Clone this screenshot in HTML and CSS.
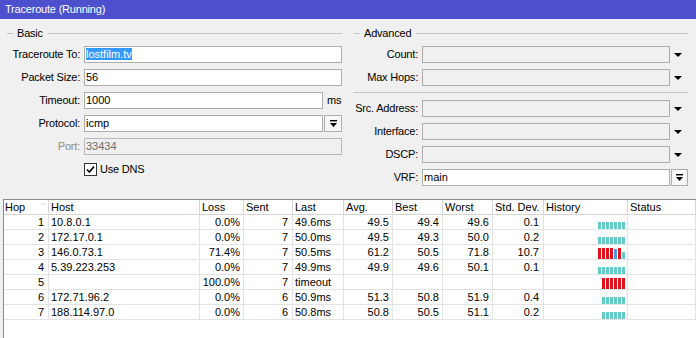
FILE: index.html
```html
<!DOCTYPE html>
<html lang="en">

<head>
  <meta charset="UTF-8">
  <title>Traceroute (Running)</title>
  <link rel="stylesheet" href="styles.css">
</head>

<body>
  <!-- Window title -->
  <div class="titlebar">Traceroute (Running)</div>

  <div class="top">
    <!-- Basic group -->
    <div class="group">
      <div class="legend">Basic</div>
      <div class="rows">
        <div class="row">
          <span class="label">Traceroute To:</span>
          <div class="ctl"><div class="box"><span class="sel">lostfilm.tv</span></div></div>
        </div>
        <div class="row">
          <span class="label">Packet Size:</span>
          <div class="ctl"><div class="box">56</div></div>
        </div>
        <div class="row">
          <span class="label">Timeout:</span>
          <div class="ctl"><div class="box">1000</div><span class="unit">ms</span></div>
        </div>
        <div class="row">
          <span class="label">Protocol:</span>
          <div class="ctl">
            <div class="box">icmp</div>
            <span class="combo-btn">
              <svg width="9" height="9" viewBox="0 0 9 9"><rect x="1" y="1" width="7" height="1.4" fill="#000"/><polygon points="1,4 8,4 4.5,8" fill="#000"/></svg>
            </span>
          </div>
        </div>
        <div class="row off">
          <span class="label">Port:</span>
          <div class="ctl"><div class="box">33434</div></div>
        </div>
        <div class="row check-row">
          <span></span>
          <label class="check">
            <svg width="13" height="13" viewBox="0 0 13 13"><rect x="0.5" y="0.5" width="12" height="12" fill="#fff" stroke="#333"/><path d="M3 6.5 L5.3 9 L10 3.6" fill="none" stroke="#000" stroke-width="1.6"/></svg>
            Use DNS
          </label>
        </div>
      </div>
    </div>

    <!-- Advanced group -->
    <div class="group adv">
      <div class="legend">Advanced</div>
      <div class="rows">
        <div class="row">
          <span class="label">Count:</span>
          <div class="ctl"><div class="box empty"></div><span class="drop"></span></div>
        </div>
        <div class="row">
          <span class="label">Max Hops:</span>
          <div class="ctl"><div class="box empty"></div><span class="drop"></span></div>
        </div>
        <div class="sep"></div>
        <div class="row">
          <span class="label">Src. Address:</span>
          <div class="ctl"><div class="box empty"></div><span class="drop"></span></div>
        </div>
        <div class="row">
          <span class="label">Interface:</span>
          <div class="ctl"><div class="box empty"></div><span class="drop"></span></div>
        </div>
        <div class="row">
          <span class="label">DSCP:</span>
          <div class="ctl"><div class="box empty"></div><span class="drop"></span></div>
        </div>
        <div class="row">
          <span class="label">VRF:</span>
          <div class="ctl">
            <div class="box">main</div>
            <span class="combo-btn">
              <svg width="9" height="9" viewBox="0 0 9 9"><rect x="1" y="1" width="7" height="1.4" fill="#000"/><polygon points="1,4 8,4 4.5,8" fill="#000"/></svg>
            </span>
          </div>
        </div>
      </div>
    </div>
  </div>

  <!-- Hops table -->
  <div class="grid">
    <div class="tr head">
      <div class="th hop">Hop <svg class="sort" width="7" height="4" viewBox="0 0 7 4"><path d="M0.5 3.5 L3.5 0.5 L6.5 3.5" fill="none" stroke="#c4c4c4"/></svg></div>
      <div class="th">Host</div>
      <div class="th">Loss</div>
      <div class="th">Sent</div>
      <div class="th">Last</div>
      <div class="th">Avg.</div>
      <div class="th">Best</div>
      <div class="th">Worst</div>
      <div class="th">Std. Dev.</div>
      <div class="th">History</div>
      <div class="th">Status</div>
    </div>

    <div class="tr">
      <div class="td num pr4">1</div><div class="td">10.8.0.1</div><div class="td num">0.0%</div><div class="td num pr4">7</div><div class="td">49.6ms</div>
      <div class="td num">49.5</div><div class="td num">49.4</div><div class="td num">49.6</div><div class="td num pr4">0.1</div>
      <div class="td hist"><i class="ok"></i><i class="ok"></i><i class="ok"></i><i class="ok"></i><i class="ok"></i><i class="ok"></i><i class="ok"></i></div>
      <div class="td"></div>
    </div>
    <div class="tr">
      <div class="td num pr4">2</div><div class="td">172.17.0.1</div><div class="td num">0.0%</div><div class="td num pr4">7</div><div class="td">50.0ms</div>
      <div class="td num">49.5</div><div class="td num">49.3</div><div class="td num">50.0</div><div class="td num pr4">0.2</div>
      <div class="td hist"><i class="ok"></i><i class="ok"></i><i class="ok"></i><i class="ok"></i><i class="ok"></i><i class="ok"></i><i class="ok"></i></div>
      <div class="td"></div>
    </div>
    <div class="tr">
      <div class="td num pr4">3</div><div class="td">146.0.73.1</div><div class="td num">71.4%</div><div class="td num pr4">7</div><div class="td">50.5ms</div>
      <div class="td num">61.2</div><div class="td num">50.5</div><div class="td num">71.8</div><div class="td num pr4">10.7</div>
      <div class="td hist"><i class="lost"></i><i class="lost"></i><i class="lost"></i><i class="lost"></i><i class="late"></i><i class="lost"></i><i class="ok"></i></div>
      <div class="td"></div>
    </div>
    <div class="tr">
      <div class="td num pr4">4</div><div class="td">5.39.223.253</div><div class="td num">0.0%</div><div class="td num pr4">7</div><div class="td">49.9ms</div>
      <div class="td num">49.9</div><div class="td num">49.6</div><div class="td num">50.1</div><div class="td num pr4">0.1</div>
      <div class="td hist"><i class="ok"></i><i class="ok"></i><i class="ok"></i><i class="ok"></i><i class="ok"></i><i class="ok"></i><i class="ok"></i></div>
      <div class="td"></div>
    </div>
    <div class="tr">
      <div class="td num pr4">5</div><div class="td"></div><div class="td num">100.0%</div><div class="td num pr4">7</div><div class="td">timeout</div>
      <div class="td num"></div><div class="td num"></div><div class="td num"></div><div class="td num"></div>
      <div class="td hist"><i class="lost"></i><i class="lost"></i><i class="lost"></i><i class="lost"></i><i class="lost"></i><i class="lost"></i></div>
      <div class="td"></div>
    </div>
    <div class="tr">
      <div class="td num pr4">6</div><div class="td">172.71.96.2</div><div class="td num">0.0%</div><div class="td num pr4">6</div><div class="td">50.9ms</div>
      <div class="td num">51.3</div><div class="td num">50.8</div><div class="td num">51.9</div><div class="td num pr4">0.4</div>
      <div class="td hist"><i class="ok"></i><i class="ok"></i><i class="ok"></i><i class="ok"></i><i class="ok"></i><i class="ok"></i></div>
      <div class="td"></div>
    </div>
    <div class="tr">
      <div class="td num pr4">7</div><div class="td">188.114.97.0</div><div class="td num">0.0%</div><div class="td num pr4">6</div><div class="td">50.8ms</div>
      <div class="td num">50.8</div><div class="td num">50.5</div><div class="td num">51.1</div><div class="td num pr4">0.2</div>
      <div class="td hist"><i class="ok"></i><i class="ok"></i><i class="ok"></i><i class="ok"></i><i class="ok"></i><i class="ok"></i></div>
      <div class="td"></div>
    </div>
  </div>
</body>

</html>
```

FILE: styles.css
```css
/* Base window */
body {
  margin: 0;
  height: 338px;
  overflow: hidden;
  background: #f0f0f0;
  font-family: "Liberation Sans", Arial, sans-serif;
  font-size: 11px;
  color: #000;
}

.titlebar {
  height: 19px;
  line-height: 19px;
  padding-left: 5px;
  background: #4d50cc;
  color: #fff;
  letter-spacing: -0.2px;
}

/* Two groups side by side */
.top {
  display: grid;
  grid-template-columns: 336px 335px;
  column-gap: 11px;
  padding: 7px 8px 0 6px;
}

.legend {
  display: flex;
  align-items: center;
  height: 14px;
  margin-bottom: 6px;
  letter-spacing: -0.2px;
}

.legend::before {
  content: '';
  width: 6px;
  height: 1px;
  margin: 0 4px 0 1px;
  background: #c6c6c6;
}

.legend::after {
  content: '';
  flex: 1;
  height: 1px;
  margin-left: 5px;
  background: #c6c6c6;
}

.rows {
  display: flex;
  flex-direction: column;
  gap: 6px;
}

.row {
  display: grid;
  grid-template-columns: 74px 1fr;
  column-gap: 4px;
  height: 17px;
  line-height: 17px;
}

.adv .row {
  grid-template-columns: 65px 1fr;
}

.label {
  text-align: right;
  letter-spacing: -0.2px;
  white-space: nowrap;
}

.ctl {
  display: flex;
  min-width: 0;
}

.box {
  flex: 1;
  box-sizing: border-box;
  height: 17px;
  padding: 0 1px;
  line-height: 15px;
  border: 1px solid #adadad;
  background: #fff;
  white-space: nowrap;
  overflow: hidden;
}

.box.empty {
  background: #f0f0f0;
}

.sel {
  background: #3399ff;
  color: #fff;
}

.unit {
  width: 15px;
  padding-left: 4px;
  letter-spacing: -0.2px;
}

.combo-btn {
  display: flex;
  align-items: center;
  justify-content: center;
  box-sizing: border-box;
  width: 18px;
  height: 17px;
  margin-left: 1px;
  border: 1px solid #adadad;
  background: #f7f7f7;
}

.adv .combo-btn {
  width: 17px;
}

/* Plain dropdown arrow for the empty fields */
.drop {
  width: 18px;
  position: relative;
}

.drop::after {
  content: '';
  position: absolute;
  left: 4px;
  top: 7px;
  border-left: 4px solid transparent;
  border-right: 4px solid transparent;
  border-top: 4px solid #000;
}

.off .box {
  color: #6e6e6e;
  background: #f0f0f0;
  border-color: #b9b9b9;
}

.off .label {
  color: #8c8c8c;
}

.check-row {
  height: 16px;
}

.check {
  display: flex;
  align-items: center;
  gap: 3px;
  height: 16px;
  letter-spacing: -0.2px;
}

.sep {
  height: 1px;
  margin-bottom: 1px;
  background: #c6c6c6;
}

/* Hops list */
.grid {
  height: 138px;
  margin: 13px 0 0 3px;
  border-left: 1px solid #8c8c8c;
  border-top: 1px solid #8c8c8c;
  background: #fff;
  overflow: hidden;
}

.tr {
  display: grid;
  grid-template-columns: 45px 151px 44px 49px 51px 49px 50px 50px 51px 84px 1fr;
}

.th,
.td {
  box-sizing: border-box;
  height: 15px;
  line-height: 14px;
  padding: 0 2px;
  white-space: nowrap;
  overflow: hidden;
}

.th {
  border-right: 1px solid #d5d5d5;
  border-bottom: 1px solid #d5d5d5;
}

.th.hop {
  display: flex;
  padding-left: 1px;
}

.sort {
  margin: 2px 0 0 16px;
}

.td {
  border-right: 1px solid #e3e3e3;
  border-bottom: 1px solid #e3e3e3;
}

.num {
  text-align: right;
  padding-right: 3px;
}

.pr4 {
  padding-right: 4px;
}

.hist {
  display: flex;
  justify-content: flex-end;
  align-items: flex-end;
  gap: 1px;
  padding-right: 2px;
}

.hist i {
  display: block;
  width: 3px;
}

.hist .ok {
  height: 7px;
  background: #62ccc7;
}

.hist .lost {
  height: 11px;
  background: #e0121d;
}

.hist .late {
  height: 10px;
  background: #4b9be0;
}
```
